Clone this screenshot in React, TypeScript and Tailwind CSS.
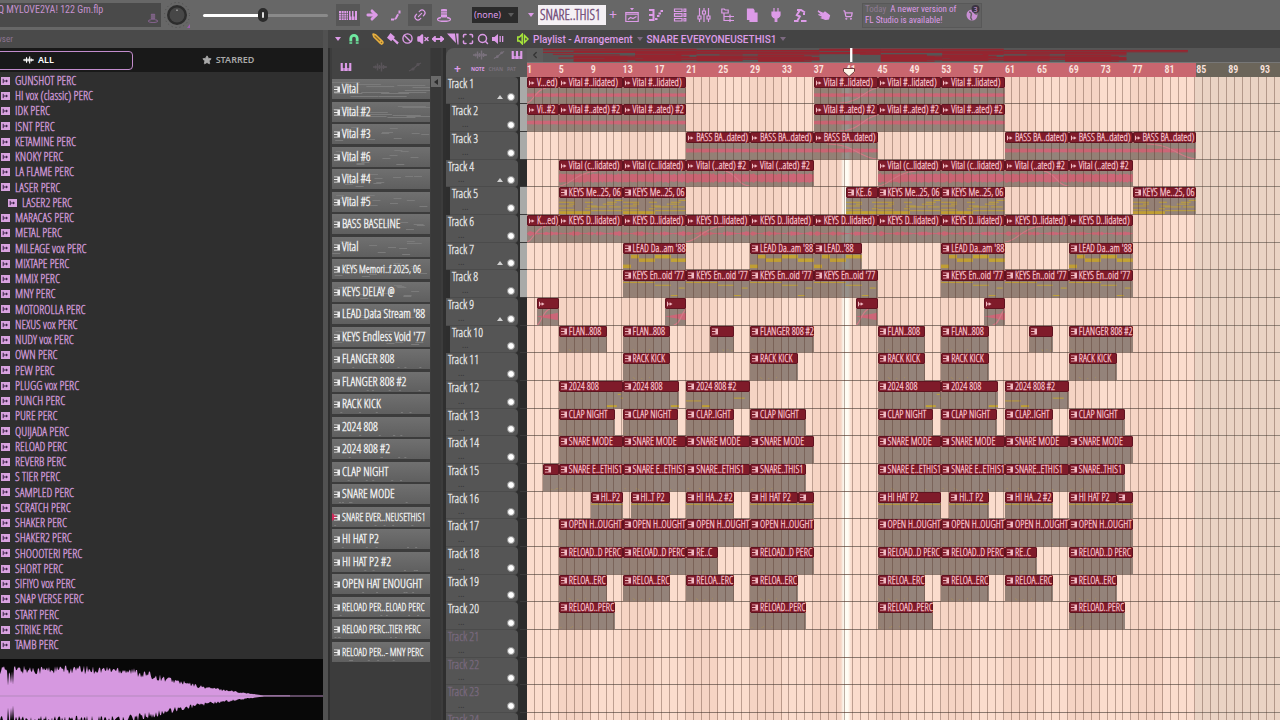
import React from 'react';
import clsx from 'clsx';
import {
  ArrowRight,
  Ban,
  ChevronLeft,
  Link2,
  Maximize,
  MoveHorizontal,
  Pencil,
  Search,
  ShoppingCart,
  Star,
  VolumeX,
} from 'lucide-react';

type Kind = 'flat' | 'dense' | 'bumpy' | 'ramp' | 'keys' | 'lead' | 'void' | 'sub' | 'line' | 'dots';
type Fade = 'in' | 'lateIn' | 'lateOut' | 'longOut';
type Clip = [start: number, length: number, label: string, fade?: Fade];
type Note = [x: number, y: number, width: number, height: number];

interface Track {
  kind: Kind;
  clips: Clip[];
  sub?: boolean;
  folder?: boolean;
  lightKey?: boolean;
}

const VISIBLE_BARS = 94.5;
const SONG_END = 85;

const NARROW = "font-['Open_Sans_Condensed_Light','Roboto_Condensed',sans-serif] font-semibold";

const repeat = (starts: number[], length: number, label: string): Clip[] =>
  starts.map((start) => [start, length, label]);

const ALL_DRUMS = [5, 13, 21, 29, 45, 53, 61, 69];

const TRACKS: Track[] = [
  {
    kind: 'flat',
    folder: true,
    lightKey: true,
    clips: [
      [1, 4, 'V...ed)', 'in'],
      ...repeat([5, 13], 8, 'Vital #..lidated)'),
      [37, 8, 'Vital #..lidated)', 'lateIn'],
      ...repeat([45, 53], 8, 'Vital #..lidated)'),
    ],
  },
  {
    kind: 'flat',
    sub: true,
    lightKey: true,
    clips: [
      [1, 4, 'Vi..#2'],
      ...repeat([5, 13], 8, 'Vital #..ated) #2'),
      [37, 8, 'Vital #..ated) #2', 'lateIn'],
      ...repeat([45, 53], 8, 'Vital #..ated) #2'),
    ],
  },
  {
    kind: 'flat',
    sub: true,
    lightKey: true,
    clips: [
      ...repeat([21, 29], 8, 'BASS BA..dated)'),
      [37, 8, 'BASS BA..dated)', 'longOut'],
      ...repeat([61, 69], 8, 'BASS BA..dated)'),
      [77, 8, 'BASS BA..dated)', 'longOut'],
    ],
  },
  {
    kind: 'dense',
    folder: true,
    clips: [
      [5, 8, 'Vital (c..lidated)', 'in'],
      [13, 8, 'Vital (c..lidated)'],
      [21, 8, 'Vital (..ated) #2', 'lateOut'],
      [29, 8, 'Vital (..ated) #2'],
      [45, 8, 'Vital (c..lidated)', 'in'],
      [53, 8, 'Vital (c..lidated)'],
      [61, 8, 'Vital (..ated) #2', 'lateOut'],
      [69, 8, 'Vital (..ated) #2'],
    ],
  },
  {
    kind: 'keys',
    sub: true,
    lightKey: true,
    clips: [
      ...repeat([5, 13], 8, 'KEYS Me..25, 06'),
      [41, 4, 'KE..6'],
      ...repeat([45, 53, 77], 8, 'KEYS Me..25, 06'),
    ],
  },
  {
    kind: 'bumpy',
    lightKey: true,
    clips: [
      [1, 4, 'K...ed)', 'in'],
      ...repeat([5, 13], 8, 'KEYS D..lidated)'),
      [21, 8, 'KEYS D..lidated)', 'in'],
      ...repeat([29, 37, 45, 53], 8, 'KEYS D..lidated)'),
      [61, 8, 'KEYS D..lidated)', 'in'],
      [69, 8, 'KEYS D..lidated)'],
    ],
  },
  {
    kind: 'lead',
    folder: true,
    lightKey: true,
    clips: [
      ...repeat([13, 29], 8, "LEAD Da..am '88"),
      [37, 6, "LEAD..'88"],
      ...repeat([53, 69], 8, "LEAD Da..am '88"),
    ],
  },
  {
    kind: 'void',
    sub: true,
    lightKey: true,
    clips: repeat([13, 21, 29, 37, 53, 61, 69], 8, "KEYS En..oid '77"),
  },
  {
    kind: 'ramp',
    folder: true,
    clips: [
      [2.3, 2.7, '', 'in'],
      [18.3, 2.7, '', 'lateIn'],
      [42.3, 2.7, '', 'in'],
      [58.3, 2.7, '', 'lateIn'],
    ],
  },
  {
    kind: 'dots',
    sub: true,
    clips: [
      ...repeat([5, 13, 45, 53], 6, 'FLAN..808'),
      ...repeat([24, 64], 3, ''),
      ...repeat([29, 69], 8, 'FLANGER 808 #2'),
    ],
  },
  { kind: 'dots', clips: repeat([13, 29, 45, 53, 69], 6, 'RACK KICK') },
  {
    kind: 'sub',
    clips: [
      ...repeat([5, 45], 8, '2024 808'),
      ...repeat([13, 53], 7.1, '2024 808'),
      ...repeat([21, 61], 8, '2024 808 #2'),
    ],
  },
  {
    kind: 'dots',
    clips: [...repeat([5, 13, 29, 45, 53, 69], 7, 'CLAP NIGHT'), ...repeat([21, 61], 6, 'CLAP..IGHT')],
  },
  { kind: 'dots', clips: repeat(ALL_DRUMS, 8, 'SNARE MODE') },
  {
    kind: 'dots',
    clips: [
      [3, 2, ''],
      ...repeat([5, 13, 45, 53], 8, 'SNARE E..ETHIS1'),
      ...repeat([21, 61], 8, 'SNARE..ETHIS1'),
      ...repeat([29, 69], 7, 'SNARE..THIS1'),
    ],
  },
  {
    kind: 'line',
    clips: [
      [9, 4, 'HI..P2'],
      ...repeat([14, 54], 5, 'HI..T P2'),
      ...repeat([21, 61], 6, 'HI HA..2 #2'),
      ...repeat([29, 69], 6, 'HI HAT P2'),
      ...repeat([35, 75], 2, ''),
      [45, 8, 'HI HAT P2'],
    ],
  },
  { kind: 'dots', clips: repeat(ALL_DRUMS, 8, 'OPEN H..OUGHT') },
  {
    kind: 'dots',
    clips: [...repeat([5, 13, 29, 45, 53, 69], 8, 'RELOAD..D PERC'), ...repeat([21, 61], 4, 'RE..C')],
  },
  { kind: 'dots', clips: repeat(ALL_DRUMS, 6, 'RELOA..ERC') },
  { kind: 'dots', clips: repeat([5, 29, 45, 69], 7, 'RELOAD..PERC') },
  { kind: 'dots', clips: [] },
  { kind: 'dots', clips: [] },
  { kind: 'dots', clips: [] },
  { kind: 'dots', clips: [] },
];

const SAMPLES = [
  'GUNSHOT PERC', 'HI vox (classic) PERC', 'IDK PERC', 'ISNT PERC', 'KETAMINE PERC', 'KNOKY PERC',
  'LA FLAME PERC', 'LASER PERC', 'LASER2 PERC', 'MARACAS PERC', 'METAL PERC', 'MILEAGE vox PERC',
  'MIXTAPE PERC', 'MMIX PERC', 'MNY PERC', 'MOTOROLLA PERC', 'NEXUS vox PERC', 'NUDY vox PERC',
  'OWN PERC', 'PEW PERC', 'PLUGG vox PERC', 'PUNCH PERC', 'PURE PERC', 'QUIJADA PERC', 'RELOAD PERC',
  'REVERB PERC', 'S TIER PERC', 'SAMPLED PERC', 'SCRATCH PERC', 'SHAKER PERC', 'SHAKER2 PERC',
  'SHOOOTERI PERC', 'SHORT PERC', 'SIFIYO vox PERC', 'SNAP VERSE PERC', 'START PERC', 'STRIKE PERC',
  'TAMB PERC',
];

const PATTERNS = [
  'Vital', 'Vital #2', 'Vital #3', 'Vital #6', 'Vital #4', 'Vital #5', 'BASS BASELINE', 'Vital',
  'KEYS Memori..f 2025, 06', 'KEYS DELAY @', "LEAD Data Stream '88", "KEYS Endless Void '77",
  'FLANGER 808', 'FLANGER 808 #2', 'RACK KICK', '2024 808', '2024 808 #2', 'CLAP NIGHT', 'SNARE MODE',
  'SNARE EVER..NEUSETHIS1', 'HI HAT P2', 'HI HAT P2 #2', 'OPEN HAT ENOUGHT', 'RELOAD PER..ELOAD PERC',
  'RELOAD PERC..TIER PERC', 'RELOAD PER..- MNY PERC',
];

const noise = (n: number) => {
  const v = Math.sin(n * 127.1) * 43758.5453;
  return v - Math.floor(v);
};

const isAudio = (kind: Kind) => ['flat', 'dense', 'bumpy', 'ramp'].includes(kind);

const rowHeight = (index: number) => (index % 3 === 0 ? 'h-[27px]' : 'h-7');

const PianoIcon = ({ className }: { className?: string }) => (
  <svg viewBox="0 0 12 9" className={className} fill="currentColor" aria-hidden="true">
    <path d="M0 0h2.400v5.500h1V9H0zM4.800 0h2.400v5.500h.8V9H4v-3.500h.8zM9.600 0H12v9H8.600V5.500h1z" />
  </svg>
);

const PatternIcon = ({ className }: { className?: string }) => (
  <svg viewBox="0 0 7 7" className={className} aria-hidden="true">
    <path d="M0 0h7v7H0V6h4V4.200H0V2.800h4V1H0z" fill="currentColor" />
  </svg>
);

const WaveIcon = ({ className }: { className?: string }) => (
  <svg viewBox="0 0 14 10" className={className} stroke="currentColor" strokeWidth="1.400" aria-hidden="true">
    <path d="M0 5h14M2.500 3.500v3M4.500 1.500v7M6.500 3v4M8.500 .5v9M10.500 3v4M12 4v2" />
  </svg>
);

const CurveIcon = ({ className }: { className?: string }) => (
  <svg viewBox="0 0 14 10" className={className} fill="none" stroke="currentColor" strokeWidth="1.200" aria-hidden="true">
    <path d="M1 9 5 7 10 2.500 13 1" />
    <circle cx="5" cy="7" r="1" />
    <circle cx="10" cy="2.500" r="1" />
  </svg>
);

const SampleIcon = () => (
  <svg viewBox="0 0 9 8" className="h-2 w-[9px] shrink-0" aria-hidden="true">
    <rect width="9" height="8" fill="#d9a3e0" />
    <path d="M2.200 1.800v4.400M2.200 4h4.600M5.500 2.800v2.400" stroke="#3c2548" strokeWidth="1" fill="none" />
  </svg>
);

const AudioIcon = () => (
  <svg viewBox="0 0 6 6" className="h-1.5 w-1.5 shrink-0" aria-hidden="true">
    <path d="M0 .8h1v1.700h1.700V1.200L5.500 3 2.700 4.800V3.500H1v1.700H0z" fill="currentColor" />
  </svg>
);

const Caret = ({ className }: { className?: string }) => (
  <svg viewBox="0 0 6 4" className={clsx('h-1 w-1.5 shrink-0', className)} fill="currentColor" aria-hidden="true">
    <path d="M0 0h6L3 4z" />
  </svg>
);

const StampIcon = ({ className }: { className?: string }) => (
  <svg viewBox="0 0 14 14" className={className} fill="currentColor" aria-hidden="true">
    <path d="M4 1.500C4 .7 10 .7 10 1.500V9c0 .8-6 .8-6 0z" />
    <path d="M4 9.500C1 10 .3 11 .8 12c1 1.800 11.400 1.800 12.400 0 .5-1-.2-2-3.200-2.500" fill="none" stroke="currentColor" strokeWidth="1.500" />
    <path d="M4 3.800h6M4 6h6" stroke="#666" strokeWidth=".7" />
  </svg>
);

const SpeakerIcon = ({ className }: { className?: string }) => (
  <svg viewBox="0 0 12 12" className={className} fill="currentColor" aria-hidden="true">
    <path d="M0 4h2.500L6 1v10L2.500 8H0zM7.500 3h1.300v6H7.500zM10 3h1.300v6H10z" />
  </svg>
);

const SplitSpeakerIcon = ({ className }: { className?: string }) => (
  <svg viewBox="0 0 12 12" className={className} fill="none" stroke="currentColor" strokeWidth="1.500" aria-hidden="true">
    <path d="M5.200 1.200v9.600L2.600 8H.8V4h1.800zM7.500 2.500 11 6 7.500 9.500z" />
  </svg>
);

const MagnetIcon = ({ className }: { className?: string }) => (
  <svg viewBox="0 0 12 12" className={className} fill="none" stroke="currentColor" aria-hidden="true">
    <path d="M2.800 10.800V5.500a3.200 3.200 0 0 1 6.400 0v5.300" strokeWidth="2.800" />
    <path d="M1 8.800h3.600M7.400 8.800H11" stroke="#444" strokeWidth=".8" />
  </svg>
);

const BrushIcon = ({ className }: { className?: string }) => (
  <svg viewBox="0 0 12 12" className={className} fill="currentColor" aria-hidden="true">
    <path d="M3.500 0 8 4 6.800 5.300l5 4.200-1.500 2L5.500 6.800 4.200 8.200 0 4.800z" />
  </svg>
);

const SliceIcon = ({ className }: { className?: string }) => (
  <svg viewBox="0 0 12 12" className={className} fill="currentColor" aria-hidden="true">
    <path d="M0 .5h8L9 10 5.500 6.500zM9 .5h2.500v11H10.500z" />
  </svg>
);

const TOOL_ICONS: { name: string; icon: React.ReactNode }[] = [
  {
    name: 'Playlist',
    icon: (
      <>
        <path d="M5 0h4L7 2.500z" fill="currentColor" stroke="none" />
        <path d="M.8 4.500h12.400v9H.8zM.8 6.200h12.400M3 11.500l2.500-2L8 10.500l3.500-2" />
      </>
    ),
  },
  {
    name: 'Piano roll',
    icon: <path d="M0 2h4.500v10H0M0 7h4.500M6 11h2.500M8 8h2.500M9.500 5.500H12M11.500 3H14" strokeWidth="2" />,
  },
  {
    name: 'Channel rack',
    icon: <path d="M1.500 1h7.500v2.500H1.500zM1.500 5.700h7.500v2.600H1.500zM1.500 10.500h7.500V13H1.500zM11 1h1.800v2.500H11zM11 5.700h1.800v2.600H11zM11 10.500h1.800V13H11z" />,
  },
  {
    name: 'Mixer',
    icon: <path d="M2.500 0v8M2.500 11v3M7 0v3M7 6v8M11.500 0v8M11.500 11v3M1 8h3v3H1zM5.500 3h3v3h-3zM10 8h3v3h-3z" />,
  },
  {
    name: 'Browser',
    icon: <path d="M.8 1h2.400l1 1h3v3H.8zM3 5v7.500h4M3 8.500h4M7 8.500h6M7 12.500h6M9 6.500v4M9 11v3" />,
  },
  {
    name: 'Project info',
    icon: <path d="M2.500 1h5.500l1 1.500V5h3v8.500H5V11.500H2.500z" fill="currentColor" />,
  },
  {
    name: 'Plugins',
    icon: <path d="M5 0v4M9 0v4M3 4h8v3c0 1.500-1.500 2.500-3.200 3.300V14H6.200v-3.700C4.500 9.500 3 8.500 3 7z" fill="currentColor" />,
  },
  {
    name: 'Tempo tapper',
    icon: <path d="M4 2h4l4 2.500M7 2 3.800 7l3 1.500L4.500 12.500M1 13h4.500M8 13h5.500M11 5v2" strokeWidth="2" />,
  },
  {
    name: 'Touch',
    icon: <path d="M1 3 6.500 5.500 8 4l4.500 3.500-1 3.500-3 .5-4-1.500 2-1L1.500 6.500 6 7.500z" fill="currentColor" />,
  },
];

const ToolButton = ({ name, active, children }: { name: string; active?: boolean; children: React.ReactNode }) => (
  <button
    aria-label={name}
    className={clsx('flex h-[22px] w-6 shrink-0 items-center justify-center text-[#dd9be8]', active && 'bg-[#575757]')}
  >
    {children}
  </button>
);

const TopBar = () => (
  <header className="flex h-[30px] shrink-0 items-center overflow-hidden bg-[#676767] text-[#dd9be8]">
    <div className="flex h-6 w-[161px] shrink-0 justify-between bg-[#4a4a4a] pr-0.5">
      <span className="-ml-0.5 font-['Roboto_Condensed',sans-serif] text-[10px] leading-[14px] text-[#c592cf]">
        Q MYLOVE2YA! 122 Gm.flp
      </span>
      <StampIcon className="mr-px mt-2.5 h-2.5 w-2.5 text-[#81618a]" />
    </div>
    <svg viewBox="0 0 28 28" className="ml-0.5 h-7 w-7 shrink-0" aria-label="Main volume">
      <circle cx="14" cy="14" r="12.500" fill="none" stroke="#4d4d4d" strokeWidth="1" strokeDasharray="1 3" />
      <circle cx="14" cy="14" r="10" fill="#2c2c2c" />
      <circle cx="14" cy="14" r="7.500" fill="#474747" />
      <path d="M14 8.500v1.500" stroke="#bdbdbd" strokeWidth="1.200" />
      <path d="m24 27 3-4v4z" fill="#9a5fae" />
    </svg>
    <input
      type="range"
      aria-label="Main pitch"
      defaultValue={48}
      className="ml-3 h-[3px] w-[125px] shrink-0 appearance-none rounded bg-[linear-gradient(to_right,#fff_48%,#8a8a8a_48%)] [&::-webkit-slider-thumb]:h-3.5 [&::-webkit-slider-thumb]:w-2.5 [&::-webkit-slider-thumb]:appearance-none [&::-webkit-slider-thumb]:rounded-full [&::-webkit-slider-thumb]:border-4 [&::-webkit-slider-thumb]:border-[#2b2b2b] [&::-webkit-slider-thumb]:bg-[#ddd]"
    />
    <div className="ml-2 flex shrink-0">
      <ToolButton name="Typing keyboard" active>
        <svg viewBox="0 0 18 9" className="h-[9px] w-[18px]" fill="currentColor">
          <path d="M0 0h9v9H0zM10 0h1.500v5.500h1V9H10zM13 0h1.500v5.500h.5V9h-2zM16 0h2v9h-2.500V5.500h.5z" />
          <path d="M0 2.500h9M0 4.800h9M0 7h9M2.500 0v9M5 0v9M7.500 0v9" stroke="#575757" strokeWidth=".6" />
        </svg>
      </ToolButton>
      <ToolButton name="Play">
        <ArrowRight className="h-3.5 w-3.5" strokeWidth={5} />
      </ToolButton>
      <ToolButton name="Slide">
        <svg viewBox="0 0 12 12" className="h-3 w-3" fill="none" stroke="currentColor" strokeWidth="2">
          <path d="M1 10.500h3M4.500 10c3 0 1.500-4 4-4.500M9.500 4.500V1.500" />
        </svg>
      </ToolButton>
      <ToolButton name="Link" active>
        <Link2 className="h-3.5 w-3.5 -rotate-45" strokeWidth={2} />
      </ToolButton>
      <ToolButton name="Stamp">
        <StampIcon className="h-3.5 w-3.5" />
      </ToolButton>
    </div>
    <div className="relative ml-4 w-[46px] shrink-0">
      <select
        aria-label="Stamp preset"
        className="block h-4 w-full appearance-none bg-[#2b2b2b] pl-0.5 text-[9px] leading-4 text-[#dd9be8]"
      >
        <option>(none)</option>
      </select>
      <Caret className="pointer-events-none absolute right-1 top-1.5 text-[#5c5c5c]" />
    </div>
    <Caret className="ml-2.5 mr-1" />
    <button className={clsx('h-5 w-[68px] shrink-0 bg-[#f4f0f4] pl-0.5 text-left text-sm leading-5 text-[#7a567f]', NARROW)}>
      SNARE..THIS1
    </button>
    <button aria-label="New pattern" className="w-3.5 shrink-0 text-center text-sm leading-4">
      +
    </button>
    <div className="flex shrink-0">
      {TOOL_ICONS.map(({ name, icon }) => (
        <ToolButton key={name} name={name}>
          <svg viewBox="0 0 14 14" className="h-3.5 w-3.5" fill="none" stroke="currentColor" strokeWidth="1.200">
            {icon}
          </svg>
        </ToolButton>
      ))}
      <ToolButton name="Shop">
        <ShoppingCart className="h-2.5 w-2.5" strokeWidth={3} />
      </ToolButton>
    </div>
    <div className="ml-0.5 flex h-[25px] w-[120px] shrink-0 justify-between border border-[#585858] bg-[#616161] pl-0.5">
      <p className="whitespace-nowrap font-['Roboto_Condensed',sans-serif] text-[9px] leading-[11px]">
        <span className="text-[#8f7b94]">Today</span>&nbsp; A newer version of
        <br />
        FL Studio is available!
      </p>
      <svg viewBox="0 0 14 16" className="mr-px mt-px h-4 w-3.5" aria-label="3 updates">
        <circle cx="6" cy="10" r="5.500" fill="#c88fd3" />
        <path d="M3 7c2 0 3 2 2 4s0 3 1 4M9 6c-1 2 0 3 2 3" stroke="#616161" strokeWidth="1.500" fill="none" />
        <circle cx="9.500" cy="4" r="4" fill="#3b3340" />
        <text x="9.500" y="6.500" textAnchor="middle" fontSize="7" fill="#d9a3e0">
          3
        </text>
      </svg>
    </div>
  </header>
);

const SampleWave = () => {
  const upper: string[] = [];
  const lower: string[] = [];
  for (let x = 0; x <= 290; x += 1) {
    const body = x < 125 ? 28 : x < 200 ? 28 - (x - 125) * 0.24 : Math.max(10 - (x - 200) * 0.15, 0.4);
    const dip = x === 8 || x === 11 || x === 13 ? 0.45 : 1;
    const rough = body > 2 ? (noise(x) - 0.7) * Math.min(body * 0.35, 9) : 0;
    const roughLow = body > 2 ? (noise(x + 500) - 0.6) * Math.min(body * 0.35, 9) : 0;
    upper.push(`${x},${37 - (body + rough) * dip}`);
    lower.unshift(`${x},${37 + (body * 0.9 + roughLow) * dip}`);
  }
  return (
    <svg viewBox="0 0 323 61" preserveAspectRatio="none" className="h-[61px] w-full shrink-0 bg-[#080808]" aria-label="Sample preview">
      <polygon points={[...upper, ...lower].join(' ')} fill="#d698e0" />
      <path d="M0 37h323" stroke="#b48abd" strokeWidth="1" />
    </svg>
  );
};

const Browser = () => (
  <aside className="flex w-[323px] shrink-0 flex-col overflow-hidden bg-[#2f2f2f]">
    <div className="h-[18px] shrink-0 bg-[#4a4a4a] font-['Roboto_Condensed',sans-serif] text-[9px] leading-[18px] text-[#8b7490]">
      <span className="-ml-1">wser</span>
    </div>
    <div className="flex h-6 shrink-0 items-center bg-[#191919] text-[9px] font-semibold">
      <button className="-ml-1 flex h-[19px] w-[137px] items-center gap-1 rounded border border-[#c38ccc] pl-[26px] text-white">
        <WaveIcon className="h-2 w-[11px]" />
        ALL
      </button>
      <button className="flex flex-1 items-center justify-center gap-1 text-[#a9a9a9]">
        <Star className="h-2.5 w-2.5 fill-current" />
        STARRED
      </button>
    </div>
    <ul className="min-h-0 flex-1 overflow-hidden pt-px">
      {SAMPLES.map((name) => (
        <li
          key={name}
          className={clsx(
            'flex h-[15px] items-center gap-[5px] text-xs leading-[15px] text-[#c793cf] nth-[4n]:h-4',
            NARROW,
            name === 'LASER2 PERC' ? 'pl-2' : 'pl-px'
          )}
        >
          <SampleIcon />
          {name}
        </li>
      ))}
    </ul>
    <SampleWave />
  </aside>
);

const PLAYLIST_TOOLS: { name: string; icon: React.ReactNode }[] = [
  { name: 'Draw', icon: <Pencil className="h-3 w-3 rotate-90 fill-[#8a6a2a] text-[#e8b040]" strokeWidth={3} /> },
  { name: 'Paint', icon: <BrushIcon className="h-3 w-3" /> },
  { name: 'Delete', icon: <Ban className="h-[11px] w-[11px]" strokeWidth={3} /> },
  { name: 'Mute', icon: <VolumeX className="h-3 w-3 fill-current" strokeWidth={3} /> },
  { name: 'Slip', icon: <MoveHorizontal className="h-3 w-3" strokeWidth={4} /> },
  { name: 'Slice', icon: <SliceIcon className="h-3 w-3" /> },
  { name: 'Select', icon: <Maximize className="h-3 w-3" strokeWidth={3} /> },
  { name: 'Zoom', icon: <Search className="h-3 w-3" strokeWidth={3} /> },
  { name: 'Playback', icon: <SpeakerIcon className="h-3 w-3" /> },
];

const PlaylistToolbar = () => (
  <div className="flex h-[18px] shrink-0 items-center bg-[#444] text-[#dd9be8]">
    <Caret className="ml-[7px]" />
    <button aria-label="Snap" className="ml-[7px] text-[#6fe8a0]">
      <MagnetIcon className="h-3 w-3" />
    </button>
    <div className="ml-2.5 flex shrink-0">
      {PLAYLIST_TOOLS.map(({ name, icon }) => (
        <button key={name} aria-label={name} className="flex w-[15px] justify-center">
          {icon}
        </button>
      ))}
    </div>
    <SplitSpeakerIcon className="ml-3 h-3 w-3 shrink-0 text-[#a8e83a]" />
    <h1 className="ml-1 flex items-center gap-1 whitespace-nowrap font-['Roboto',sans-serif] text-[10px] font-medium">
      Playlist - Arrangement
      <Caret className="text-[#7d6a82]" />
      SNARE EVERYONEUSETHIS1
      <Caret className="text-[#7d6a82]" />
    </h1>
  </div>
);

const PatternPicker = () => (
  <section className="flex w-[118px] shrink-0 overflow-hidden bg-[#3c3c3c]">
    <div className="w-[102px] shrink-0 border-l-2 border-[#303030] pl-0.5">
      <div className="flex h-[31px] items-center justify-between bg-[#434343] pl-2 pr-2 pt-1.5 text-[#595459]">
        <PianoIcon className="h-2 w-3 text-[#dd9be8]" />
        <WaveIcon className="h-2.5 w-3.5" />
        <CurveIcon className="h-2.5 w-3.5" />
      </div>
      <ul>
        {PATTERNS.map((name, i) => (
          <li
            key={i}
            className={clsx(
              'relative flex h-5 items-center gap-0.5 overflow-hidden whitespace-nowrap bg-[linear-gradient(to_bottom,#707070,#5f5f5f)] pl-0.5 text-[#ececec] odd:mb-[3px] even:mb-0.5',
              NARROW,
              name.length > 21 ? 'text-[10px]' : 'text-xs'
            )}
          >
            <svg viewBox="0 0 98 20" preserveAspectRatio="none" className="absolute inset-0 h-full w-full" aria-hidden="true">
              {Array.from({ length: i < 12 ? 12 : 5 }, (_, n) => (
                <rect
                  key={n}
                  x={noise(i * 31 + n) * 90}
                  y={i < 12 ? 3 + Math.floor(noise(i * 17 + n * 3) * 15) : 18}
                  width={i < 2 ? 28 : i < 12 ? 8 : 2}
                  height="1"
                  fill="#7b7b7b"
                />
              ))}
            </svg>
            {name === 'SNARE EVER..NEUSETHIS1' && (
              <svg viewBox="0 0 6 8" className="absolute left-0 h-2 w-1.5" aria-hidden="true">
                <path d="M0 0v8l5-4z" fill="#d02c5c" />
              </svg>
            )}
            <PatternIcon className="relative h-[7px] w-1.5 shrink-0" />
            <span className="relative">{name}</span>
          </li>
        ))}
      </ul>
    </div>
    <div className="ml-px w-2.5 shrink-0 bg-[#383838] pt-7">
      <div className="flex h-[11px] items-center justify-center bg-[#6a6a6a] text-[#2c2c2c]">
        <Caret className="rotate-90" />
      </div>
    </div>
    <div className="ml-0.5 w-1 bg-[#2f2f2f]" />
  </section>
);

const TrackHeaders = () => (
  <section className="flex w-[81px] shrink-0 flex-col overflow-hidden bg-[#2e2e2e]">
    <div className="h-[29px] shrink-0 bg-[#444]">
      <div className="flex h-full flex-col justify-between rounded-tl-lg bg-[#595959] pb-0.5 pl-2 pr-1 pt-0.5 text-[#79717c]">
        <div className="flex items-center justify-end gap-1.5">
          <WaveIcon className="h-2.5 w-3.5" />
          <CurveIcon className="h-2.5 w-3" />
          <PianoIcon className="h-2 w-3 text-[#dd9be8]" />
        </div>
        <div className="flex items-center gap-1 text-[5px] font-bold leading-3">
          <button aria-label="Add track" className="mr-1.5 text-xs leading-3 text-[#dd9be8]">
            +
          </button>
          <span className="text-[#dd9be8]">NOTE</span>
          <span>CHAN</span>
          <span>PAT</span>
        </div>
      </div>
    </div>
    {TRACKS.map((track, i) => (
      <div key={i} className={clsx('flex shrink-0', rowHeight(i))}>
        <div className={clsx('flex-1', track.sub && 'pl-1')}>
          <div className="relative flex h-full flex-col justify-between rounded-r border-b border-[#4b4b4b] bg-[#555] pb-0.5 pl-0.5">
            <div className={clsx('text-xs leading-[13px]', NARROW, i < 20 ? 'text-[#dedede]' : 'text-[#75677a]')}>
              Track {i + 1}
            </div>
            <div className="flex items-center justify-end gap-1 pr-[3px]">
              {track.folder && <Caret className="rotate-180 text-[#d0d0d0]" />}
              <span className="h-2 w-2 rounded-full border border-[#8a8a8a] bg-white" />
            </div>
            <span className="absolute bottom-1 left-3 text-[8px] leading-[6px] text-[#333]">...</span>
          </div>
        </div>
        <div className={clsx('ml-0.5 w-[7px] border-b border-[#3a3a3a]', track.lightKey ? 'bg-[#a9aaa8]' : 'bg-[#2b2b2b]')} />
      </div>
    ))}
  </section>
);

const waveAmplitude = (kind: Kind, x: number, seed: number, width: number) => {
  if (kind === 'flat') return 1.7 + noise(x + seed) * 0.5;
  if (kind === 'dense') return 3.5 + noise(x + seed) * 2;
  if (kind === 'ramp') return (x / width) * 4;
  return 0.4 + Math.abs(Math.sin((x + seed) / 7)) * 2.6 * noise(x);
};

const fadePath = (fade: Fade, w: number) => {
  switch (fade) {
    case 'in':
      return `M0 17 C${w * 0.2} 16 ${w * 0.25} 2 ${w * 0.6} 0`;
    case 'lateIn':
      return `M${w * 0.4} 17 C${w * 0.75} 16 ${w * 0.75} 3 ${w} 0`;
    case 'lateOut':
      return `M${w * 0.6} 0 C${w * 0.8} 2 ${w * 0.8} 16 ${w} 17`;
    default:
      return `M${w * 0.2} 1 C${w * 0.65} 1 ${w * 0.7} 16 ${w} 17`;
  }
};

const NOTES: Partial<Record<Kind, Note[]>> = {
  keys: [
    [0, 4, 16, 1], [0, 8, 14, 1], [0, 12, 16, 1], [0, 14, 16, 3], [10, 6, 6, 1], [16, 14, 16, 3],
    [26, 4, 8, 1], [28, 8, 10, 1], [26, 11, 6, 1], [32, 9, 16, 1], [32, 13, 32, 1], [44, 6, 12, 1],
    [48, 4, 10, 1], [56, 2, 8, 1], [50, 9, 12, 1],
  ],
  lead: [[0, 12, 8, 4], [8, 1, 8, 4], [16, 5, 16, 4], [32, 1, 16, 4], [48, 5, 16, 4]],
  void: [[0, 1, 32, 1], [32, 4, 16, 1], [56, 7, 6, 1], [48, 15, 7, 1]],
  sub: [[48, 14, 10, 2], [59, 2, 3, 1], [62, 6, 2, 1]],
  line: [[0, 1, 64, 1]],
};

const ClipBody = ({ kind, clip }: { kind: Kind; clip: Clip }) => {
  const [start, length, label, fade] = clip;
  const w = length * 8;
  const points = Array.from({ length: Math.floor(w) + 1 }, (_, x) => x);
  const amp = points.map((x) => waveAmplitude(kind, x, start * 8, w));
  const notes: Note[] = label === '2024 808 #2' ? [[0, 9, 16, 1], [16, 14, 8, 2], [48, 6, 11, 1]] : (NOTES[kind] ?? []);
  return (
    <svg viewBox={`0 0 ${w} 17`} preserveAspectRatio="none" className="min-h-0 w-full flex-1 bg-[#4a433e]/58" aria-hidden="true">
      {isAudio(kind) && (
        <polygon
          fill="#cc6677"
          points={[...points.map((x) => `${x},${8 - amp[x]}`), ...points.map((x) => `${x},${8 + amp[x]}`).reverse()].join(' ')}
        />
      )}
      {notes.map(([x, y, nw, h], i) => (
        <rect key={i} x={x} y={y} width={nw} height={h} fill="#c2a335" />
      ))}
      {kind === 'dots' &&
        [0, 1, 2, 3].map((n) => (
          <rect key={n} x={w * noise(n + length)} y={n % 2 ? 15 : 14} width="1" height="1" fill="#a8925e" />
        ))}
      {fade && <path d={fadePath(fade, w)} fill="none" stroke="#d07a86" strokeWidth="1.200" />}
    </svg>
  );
};

const Lane = ({ track, index }: { track: Track; index: number }) => (
  <div className={clsx('relative shrink-0 border-b border-[#8d7a70]', rowHeight(index))}>
    {track.clips.map((clip) => (
      <div
        key={clip[0]}
        className="absolute inset-y-0 flex flex-col"
        style={{
          left: `${((clip[0] - 1) / VISIBLE_BARS) * 100}%`,
          width: `${(clip[1] / VISIBLE_BARS) * 100}%`,
        }}
      >
        <div
          className={clsx(
            'relative z-20 flex h-[11px] shrink-0 items-center gap-0.5 whitespace-nowrap rounded-xs bg-[#7f1b2a] pl-0.5 text-[10px] leading-[11px] text-[#f0b9c1] shadow-[inset_0_0_0_1px_#5f1420]',
            NARROW
          )}
        >
          {isAudio(track.kind) ? <AudioIcon /> : <PatternIcon className="h-[7px] w-1.5 shrink-0" />}
          {clip[2]}
        </div>
        <ClipBody kind={track.kind} clip={clip} />
      </div>
    ))}
  </div>
);

const Overview = () => (
  <div className="flex h-[15px] shrink-0 border-b border-[#777]">
    <button aria-label="Scroll left" className="flex w-4 items-center justify-center bg-[#5c5c5c] text-[#333]">
      <ChevronLeft className="h-2.5 w-2.5" strokeWidth={3} />
    </button>
    <svg viewBox="0 0 96 20" preserveAspectRatio="none" className="h-full min-w-0 flex-1 bg-[#565656]" aria-label="Song overview">
      {TRACKS.flatMap((track, i) =>
        track.clips.map(([start, length]) => (
          <rect key={`${i}-${start}`} x={start - 1} y={i * 0.9 + 1} width={length} height="1.500" fill="#98242f" />
        ))
      )}
      <rect x="40" y="0" width=".3" height="20" fill="#fff" />
    </svg>
  </div>
);

const Ruler = () => (
  <div className="relative flex h-3.5 shrink-0 overflow-hidden bg-[#6b655a]">
    <div className="bg-[#c9666f]" style={{ width: `${((SONG_END - 1) / VISIBLE_BARS) * 100}%` }} />
    {Array.from({ length: 24 }, (_, i) => (
      <span
        key={i}
        className="absolute font-['Roboto_Condensed',sans-serif] text-[10px] font-semibold leading-[14px] text-[#fbe3de]"
        style={{ left: `${((i * 4) / VISIBLE_BARS) * 100}%` }}
      >
        {i * 4 + 1}
      </span>
    ))}
    <svg
      viewBox="0 0 12 9"
      className="absolute bottom-0 h-[9px] w-3"
      style={{ left: `${(39.6 / VISIBLE_BARS) * 100}%` }}
      aria-label="Play position"
    >
      <path d="M.5.5h11v3L6 8.500.5 3.500z" fill="#fff5e8" stroke="#6d3a3c" />
    </svg>
  </div>
);

const Timeline = () => (
  <section className="flex min-w-0 flex-1 flex-col overflow-hidden bg-[#fbdccd]">
    <Overview />
    <Ruler />
    <div className="relative flex min-h-0 flex-1 flex-col overflow-hidden">
      <div
        className="absolute inset-y-0 w-2.5 bg-[linear-gradient(to_right,transparent,#fffdf5_20%,#fffdf5_70%,transparent)]"
        style={{ left: `${(39.4 / VISIBLE_BARS) * 100}%` }}
      />
      <div className="pointer-events-none absolute inset-0 z-10 flex overflow-hidden" aria-hidden="true">
        {Array.from({ length: 95 }, (_, i) => (
          <div
            key={i}
            className={clsx(
              'shrink-0 border-r border-[#4b2a20]/35',
              i + 1 >= SONG_END ? 'bg-[#a8b0a0]/20' : Math.floor(i / 4) % 2 === 1 && 'bg-[#a05030]/5'
            )}
            style={{ width: `${100 / VISIBLE_BARS}%` }}
          />
        ))}
      </div>
      {TRACKS.map((track, i) => (
        <Lane key={i} track={track} index={i} />
      ))}
    </div>
  </section>
);

export default function App() {
  return (
    <div className="flex h-screen flex-col overflow-hidden bg-[#333] font-['Noto_Sans',sans-serif]">
      <TopBar />
      <div className="flex min-h-0 flex-1">
        <Browser />
        <div className="w-[5px] shrink-0 bg-[#515151]" />
        <main className="flex min-w-0 flex-1 flex-col">
          <PlaylistToolbar />
          <div className="flex min-h-0 flex-1">
            <PatternPicker />
            <TrackHeaders />
            <Timeline />
          </div>
        </main>
      </div>
    </div>
  );
}
